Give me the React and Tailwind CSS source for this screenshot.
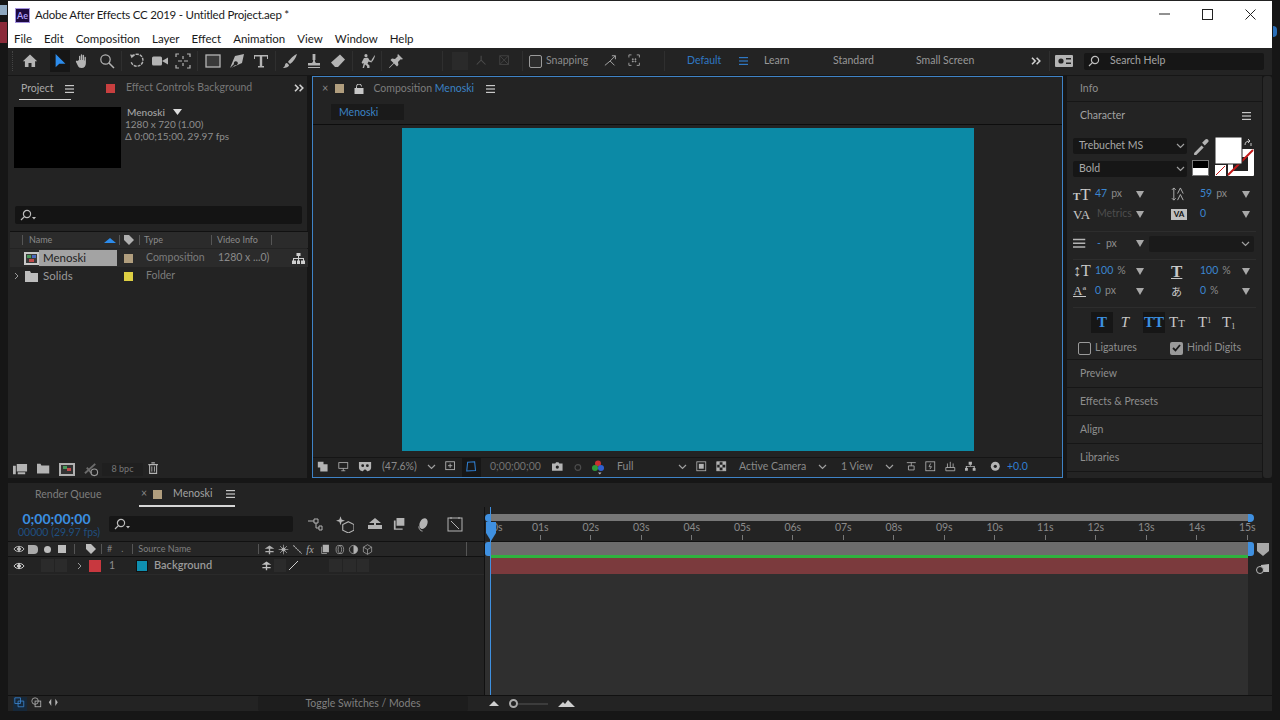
import React from 'react';

const Ic = ({ s = 16, className = 'text-[#b4b4b4]', children, vb = '0 0 16 16' }) => (
  <svg width={s} height={s} viewBox={vb} fill="none" stroke="none" className={`shrink-0 ${className}`}>
    {children}
  </svg>
);

const Burger = ({ className = 'text-[#c8c8c8]' }) => (
  <svg width="9" height="8" viewBox="0 0 9 8" className={`shrink-0 ${className}`} fill="currentColor">
    <rect y="0" width="9" height="1.2" />
    <rect y="3.4" width="9" height="1.2" />
    <rect y="6.8" width="9" height="1.2" />
  </svg>
);

const Chev = ({ className = 'text-[#a0a0a0]' }) => (
  <svg width="9" height="6" viewBox="0 0 9 6" className={`shrink-0 ${className}`} fill="none" stroke="currentColor" strokeWidth="1.2">
    <path d="M1 1l3.5 3.5L8 1" />
  </svg>
);

const Tri = () => (
  <svg width="8" height="7" viewBox="0 0 8 7" className="shrink-0 text-[#a8a8a8]" fill="currentColor">
    <path d="M0 0h8L4 7z" />
  </svg>
);

const Dbl = () => (
  <svg width="10" height="8" viewBox="0 0 10 8" className="shrink-0 text-[#d0d0d0]" fill="none" stroke="currentColor" strokeWidth="1.6">
    <path d="M1 .8L4.2 4 1 7.2M5.6 .8L8.8 4 5.6 7.2" />
  </svg>
);

const SearchGlass = ({ drop }) => (
  <svg width="16" height="12" viewBox="0 0 16 12" className="shrink-0 text-[#bdbdbd]" fill="none" stroke="currentColor" strokeWidth="1.2">
    <circle cx="7" cy="5" r="3.6" />
    <path d="M4.4 7.6L1 11" />
    {drop && <path d="M12 8h4l-2 2.4z" fill="currentColor" stroke="none" />}
  </svg>
);

const Sep = ({ className = '' }) => <div className={`w-px h-5 bg-[#2f2f2f] shrink-0 ${className}`} />;

function Toolbar() {
  return (
    <div className="h-[27px] ml-[8px] mr-[8px] pb-[1px] flex items-center bg-[#232323] text-[10.5px] text-[#989898] shrink-0">
      <div className="w-[9px] ml-[4px] h-5 border-l border-dotted border-[#444]" />
      {/* home */}
      <div className="ml-[1px]"><Ic><path fill="currentColor" d="M8 1.5L.8 8.2h2.1V14h3.6v-4h3v4h3.6V8.2h2.1z" /></Ic></div>
      {/* selection */}
      <div className="ml-[12px] w-[20px] h-[22px] bg-[#161616] flex items-center justify-center">
        <Ic s={14} className="text-[#2d8ceb]"><path fill="currentColor" d="M3 0v15l4.2-4h7z" /></Ic>
      </div>
      <div className="ml-[5px]"><Ic><path fill="currentColor" d="M4 7V3.5c0-1 1.3-1 1.3 0V7h.5V2c0-1 1.4-1 1.4 0v5h.5V2.6c0-1 1.4-1 1.4 0V7.6h.5V4.4c0-1 1.3-1 1.3 0V10c0 3-1.6 5-4.3 5-2.2 0-3-1-3.7-2.3L1 9c-.5-1 .7-1.7 1.4-.9z" /></Ic></div>
      <div className="ml-[8px]"><Ic><circle cx="6.5" cy="6.5" r="4.7" stroke="currentColor" strokeWidth="1.2" /><path d="M10 10l5 5" stroke="currentColor" strokeWidth="1.5" /></Ic></div>
      <Sep className="ml-[6px]" />
      <div className="ml-[7px]"><Ic><path d="M3.2 3.5A6 6 0 1 1 2.2 9" stroke="currentColor" strokeWidth="1.4" strokeDasharray="3 1" /><path d="M1 1.5l5 .4-3.4 3.4z" fill="currentColor" /></Ic></div>
      <div className="ml-[7px]"><Ic><rect x="0" y="3.5" width="10" height="9" rx="1.5" fill="currentColor" /><path d="M10 8l6-3.5v7z" fill="currentColor" /></Ic></div>
      <div className="ml-[7px]"><Ic><path d="M1 4V1h3M12 1h3v3M15 12v3h-3M4 15H1v-3" stroke="currentColor" strokeWidth="1.2" /><path d="M3 8h4M9 8h4M8 3v3M8 10v3" stroke="currentColor" strokeWidth="1.2" /></Ic></div>
      <Sep className="ml-[6px]" />
      <div className="ml-[7px]"><Ic><rect x="1" y="2" width="14" height="12" fill="#3a3a3a" stroke="currentColor" strokeWidth="1.3" /></Ic></div>
      <div className="ml-[8px]"><Ic><path fill="currentColor" d="M15 1L6 3 1 15l2.5-2.5L5 11a2 2 0 1 1 1 1l-1.500 1.500L2 15l11-5z" /></Ic></div>
      <div className="ml-[8px]"><Ic><path fill="currentColor" d="M1 2h14v4h-1V3.4H9.2V13H11v1.4H5V13h1.800V3.400H2V6H1z" /></Ic></div>
      <Sep className="ml-[6px]" />
      <div className="ml-[6px]"><Ic><path fill="currentColor" d="M15 1c-3 1-7 5-9 8l2 2c3-2 6-6 7-10zM5 10c-2 0-2 2-2.200 3L1 15c3 0 6-1 6-3z" /></Ic></div>
      <div className="ml-[8px]"><Ic><path fill="currentColor" d="M6.600 1h2.800v6h-.6c0 2 .6 2.600 1.600 3H14v2.500H2V10h3.600c1-.4 1.600-1 1.600-3h-.6zM2 14h12v1H2z" /></Ic></div>
      <div className="ml-[8px]"><Ic><path fill="currentColor" d="M10 1.500l5 5-7 7.500H5L1 9.500z" /></Ic></div>
      <Sep className="ml-[6px]" />
      <div className="ml-[7px]"><Ic><path fill="currentColor" d="M6 1a1.600 1.600 0 1 1-.1 3.200A1.600 1.600 0 0 1 6 1zM4 5l4-.3 1.500 2.500 2.500 1-.5 1.200-3-1-1 2.400 2 1.600V15H7.200l-.2-2-2-1.400-1 3.400H2.600l1.200-5-1.300.7L1.600 9.600zM15 2c-1 1-3 4-3.800 6l1 .5C13.500 7 15 4 15 2z" /></Ic></div>
      <Sep className="ml-[5px]" />
      <div className="ml-[6px]"><Ic><path fill="currentColor" d="M10 1l5 5-1.200.6-1.100-.4-2.700 2.800.4 3L9 13.500 6 10.500 1.500 15l-.5-.5L5.500 10 2.500 7l1.500-1.400 3 .4L9.800 3.300l-.4-1.100z" /></Ic></div>
      <Sep className="ml-[38px]" />
      <div className="ml-[9px] w-[16px] h-[18px] bg-[#2a2a2a]" />
      <div className="ml-[7px]"><Ic s={14} className="text-[#4a4a4a]"><path d="M7 2v5L2 12M7 7l5 5" stroke="currentColor" strokeWidth="1.2" /></Ic></div>
      <div className="ml-[9px]"><Ic s={14} className="text-[#444]"><path d="M2 2l10 10M12 2L2 12M2 2h10v10H2z" stroke="currentColor" strokeWidth="1" /></Ic></div>
      <Sep className="ml-[10px]" />
      <div className="ml-[6px] w-[13px] h-[13px] border border-[#9a9a9a] rounded-[2px] bg-[#2c2c2c]" />
      <span className="ml-[4px] text-[#8c8c8c] w-[50px]">Snapping</span>
      <div className="ml-[8px]"><Ic s={14} className="text-[#a8a8a8]"><path d="M1 13l6-5 5 5M7 8l6-6M9 2h4v4" stroke="currentColor" strokeWidth="1.1" /></Ic></div>
      <div className="ml-[10px]"><Ic s={14} className="text-[#a8a8a8]"><path d="M1 4V1h3M10 1h3v3M13 10v3h-3M4 13H1v-3M5 5.500h1v1H5zM8 5.500h1v1H8zM5 8h1v1H5zM8 8h1v1H8z" stroke="currentColor" strokeWidth="1" /></Ic></div>
      <Sep className="ml-[22px]" />
      <span className="ml-[22px] text-[#2f78c4] w-[38px]">Default</span>
      <div className="ml-[14px]"><Burger className="text-[#2f78c4]" /></div>
      <span className="ml-[16px] w-[40px]">Learn</span>
      <span className="ml-[29px] w-[60px]">Standard</span>
      <span className="ml-[23px] w-[80px]">Small Screen</span>
      <div className="ml-[35px]"><Dbl /></div>
      <Sep className="ml-[8px]" />
      <div className="ml-[5px] mr-[5px]">
        <Ic s={18} className="text-[#b4b4b4]" vb="0 0 18 14">
          <rect y="1" width="18" height="12" rx="1" fill="currentColor" />
          <circle cx="6" cy="7" r="2.600" fill="#232323" />
          <path d="M11 4h5v1.500h-5zM11 8.500h5V10h-5z" fill="#232323" />
        </Ic>
      </div>
      <div className="ml-[6px] w-[180px] h-[17px] bg-[#161616] rounded-[2px] flex items-center pl-[4px]">
        <SearchGlass />
        <span className="ml-[6px] text-[#a4a4a4] font-normal">Search Help</span>
      </div>
    </div>
  );
}

function ProjectPanel() {
  return (
    <div className="w-[299px] bg-[#232323] flex flex-col text-[10.5px] text-[#8e8e8e] shrink-0">
      <div className="h-[26px] flex items-center relative shrink-0">
        <div className="ml-[11px] w-[52px] h-[26px] pt-[4px] flex items-start gap-[11px] relative">
          <span className="ml-[2px] text-[#a8a8a8] leading-[16px]">Project</span>
          <div className="mt-[5px]"><Burger /></div>
        </div>
        <div className="ml-[35px] -mt-[2px] w-[9px] h-[9px] bg-[#c83f3f]" />
        <span className="ml-[11px] -mt-[2px] w-[130px] whitespace-nowrap text-[#777]">Effect Controls Background</span>
        <div className="ml-auto mr-[3px] -mt-[2px]"><Dbl /></div>
      </div>
      <div className="ml-[11px] w-[52px] h-[1px] bg-[#d8d8d8] -mt-[3px] mb-[2px] shrink-0" />
      <div className="flex ml-[6px] mt-[5px] shrink-0">
        <div className="w-[107px] h-[61px] bg-black" />
        <div className="ml-[4px] leading-[12px] text-[10px] text-[#8e8e8e] -mt-[1px]">
          <div className="ml-[2px] flex items-center gap-[8px] font-semibold text-[#9e9e9e]">Menoski <svg width="9" height="6" viewBox="0 0 9 6" fill="#dcdcdc"><path d="M0 0h9L4.500 6z" /></svg></div>
          <div>1280 x 720 (1.00)</div>
          <div>Δ 0;00;15;00, 29.97 fps</div>
        </div>
      </div>
      <div className="ml-[7px] mr-[5px] mt-[38px] h-[18px] bg-[#141414] rounded-[2px] flex items-center pl-[5px] shrink-0"><SearchGlass drop /></div>
      <div className="mt-[7px] ml-[2px] h-[17px] w-[298px] bg-[#2b2b2b] flex items-center text-[9px] text-[#8a8a8a] border-t border-[#111] shrink-0">
        <div className="w-px h-[10px] bg-[#555] ml-[12px]" />
        <span className="ml-[6px] w-[75px]">Name</span>
        <svg width="12" height="5" viewBox="0 0 12 5" fill="#2d8ceb"><path d="M6 0l6 5H0z" /></svg>
        <div className="w-px h-[10px] bg-[#555] ml-[3px]" />
        <svg width="12" height="12" viewBox="0 0 12 12" className="ml-[3px] text-[#b0b0b0]" fill="currentColor"><path d="M1 1h5l5 5-5 5-5-5z" /></svg>
        <div className="w-px h-[10px] bg-[#555] ml-[4px]" />
        <span className="ml-[4px] w-[67px]">Type</span>
        <div className="w-px h-[10px] bg-[#555]" />
        <span className="ml-[5px] w-[54px] whitespace-nowrap">Video Info</span>
        <div className="w-px h-[10px] bg-[#555]" />
      </div>
      <div className="ml-[2px] h-[18px] w-[298px] bg-[#2b2b2b] flex items-center mt-[1px] shrink-0">
        <svg width="15" height="13" viewBox="0 0 15 13" className="ml-[14px]"><rect width="15" height="13" fill="#c8c8c8" /><rect x="2" y="2" width="11" height="9" fill="#3a3a3a" /><rect x="3" y="3" width="4" height="3" fill="#4a9a5a" /><rect x="8" y="3" width="4" height="3" fill="#4a6ac0" /><rect x="5" y="7" width="5" height="3" fill="#c04a4a" /></svg>
        <div className="w-[78px] h-[16px] bg-[#a3a3a3] text-[#1e1e1e] flex items-center pl-[4px] text-[11.5px]">Menoski</div>
        <div className="ml-[7px] w-[9px] h-[9px] bg-[#b19e7e]" />
        <span className="ml-[13px] w-[72px] text-[#7c7c7c]">Composition</span>
        <span className="w-[60px] text-[#8a8a8a] whitespace-nowrap">1280 x ...0)</span>
        <svg width="13" height="11" viewBox="0 0 13 11" className="ml-[14px] text-[#cfcfcf]" fill="currentColor"><path d="M4.500 0h4v3H7v2h5v2.500h1V11H9V7.500h2V6H7v1.500h1V11H5V7.500h1V6H2v1.500h2V11H0V7.500h1V5h5V3H4.500z" /></svg>
      </div>
      <div className="ml-[2px] h-[18px] flex items-center shrink-0">
        <svg width="5" height="8" viewBox="0 0 5 8" className="ml-[4px] text-[#9a9a9a]" fill="none" stroke="currentColor"><path d="M1 1l3 3-3 3" /></svg>
        <svg width="13" height="11" viewBox="0 0 13 11" className="ml-[6px]" fill="#bdbdbd"><path d="M0 0h5l1 2h7v9H0z" /></svg>
        <span className="ml-[5px] w-[74px] text-[#9a9a9a] text-[11.5px]">Solids</span>
        <div className="ml-[7px] w-[9px] h-[9px] bg-[#ddcf43]" />
        <span className="ml-[13px] text-[#7c7c7c]">Folder</span>
      </div>
      <div className="flex-1" />
      <div className="h-[20px] flex items-center pl-[5px] pt-[2px] text-[#a2a2a2] shrink-0">
        <Ic s={15}><path fill="currentColor" d="M0 4h3v9H0zM4 2h11v8H4zM5 11h8v2H5z" /></Ic>
        <div className="ml-[9px]"><Ic s={14}><path fill="currentColor" d="M0 2h4l1 2h9v9H0z" /></Ic></div>
        <div className="ml-[8px]"><svg width="16" height="13" viewBox="0 0 16 13"><rect width="16" height="13" fill="#b0b0b0" /><rect x="2" y="2" width="12" height="9" fill="#333" /><rect x="4" y="3" width="4" height="3" fill="#4a9a5a" /><rect x="8" y="5" width="4" height="3" fill="#c04a4a" /></svg></div>
        <div className="ml-[9px]"><Ic s={15} className="text-[#6c6c6c]"><path d="M1 12L12 2M3 6l5 6" stroke="currentColor" strokeWidth="2" /><circle cx="11" cy="11" r="3.500" stroke="#9a9a9a" strokeWidth="1.200" /></Ic></div>
        <div className="ml-[3px] w-[41px] h-[13px] bg-[#1f1f1f] text-[9px] text-[#777] flex items-center justify-center">8 bpc</div>
        <div className="ml-[4px]"><Ic s={14}><path d="M3 3h8v10H3zM1.500 3h11M5 1h4" stroke="currentColor" strokeWidth="1.200" /><path d="M5.500 5v6M8.500 5v6" stroke="currentColor" /></Ic></div>
      </div>
    </div>
  );
}

function CompPanel() {
  return (
    <div className="ml-[5px] w-[751px] border border-[#3f83c6] bg-[#232323] flex flex-col text-[10.5px] text-[#8e8e8e] shrink-0">
      <div className="h-[25px] pb-[2px] flex items-center shrink-0">
        <span className="ml-[9px] text-[#888] text-[11px]">×</span>
        <div className="ml-[7px] w-[9px] h-[9px] bg-[#b19e7e]" />
        <svg width="10" height="10" viewBox="0 0 10 10" className="ml-[10px] text-[#c8c8c8]" fill="none" stroke="currentColor"><rect x="1" y="4.500" width="8" height="5" fill="currentColor" /><path d="M2.500 4.500V2.500a2.500 2.500 0 0 1 5 0" /></svg>
        <span className="ml-[9px] text-[#7c7c7c]">Composition <span className="text-[#3b82c4]">Menoski</span></span>
        <div className="ml-[12px]"><Burger /></div>
      </div>
      <div className="h-[23px] border-b border-[#0d0d0d] flex items-start pt-[2px] shrink-0">
        <div className="ml-[18px] w-[73px] h-[16px] bg-[#1a1a1a] text-[#3b82c4] pl-[8px] leading-[16px]">Menoski</div>
      </div>
      <div className="flex-1 flex justify-center pt-[3px]">
        <div className="w-[572px] h-[323px] bg-[#0c8aa6]" />
      </div>
      <div className="h-[20px] flex items-center bg-[#212121] text-[#8a8a8a] shrink-0 border-t border-[#151515] pb-[1px]">
        <div className="ml-[4px]"><Ic s={13}><path fill="currentColor" d="M1 1h7v7H1zM4 4h9v9H4z" /></Ic></div>
        <div className="ml-[8px]"><Ic s={13}><rect x="1" y="2" width="11" height="7" stroke="currentColor" /><path d="M4 12h5M6.500 9v3" stroke="currentColor" /></Ic></div>
        <div className="ml-[7px]"><Ic s={15}><path fill="currentColor" d="M1 2h13v6c0 3-3 4-4 4L8 10H7l-2 2C4 12 1 11 1 8z" /><circle cx="5" cy="6" r="1.500" fill="#222" /><circle cx="10" cy="6" r="1.500" fill="#222" /></Ic></div>
        <span className="ml-[9px] w-[40px] whitespace-nowrap">(47.6%)</span>
        <div className="ml-[5px]"><Chev /></div>
        <div className="ml-[8px]"><Ic s={14}><rect x="2" y="2" width="10" height="9" stroke="currentColor" /><path d="M7 4v5M4.500 6.500h5" stroke="currentColor" /></Ic></div>
        <div className="ml-[4px] w-[19px] h-[19px] bg-[#161616] flex items-center justify-center"><Ic s={14} className="text-[#2f7ed0]"><path d="M3 2.500l8-.5 1 10-10 .5z" stroke="currentColor" strokeWidth="1.200" /></Ic></div>
        <span className="ml-[9px] w-[55px] text-[#727272]">0;00;00;00</span>
        <div className="ml-[7px]"><Ic s={13}><path fill="currentColor" d="M0 3h4l1-1.500h3L9 3h4v9H0z" /><circle cx="6.500" cy="7.500" r="2" fill="#222" /></Ic></div>
        <div className="ml-[8px]"><Ic s={13} className="text-[#4c4c4c]"><circle cx="6" cy="8" r="3.500" stroke="currentColor" strokeWidth="1.400" /></Ic></div>
        <svg width="12" height="15" viewBox="0 0 12 15" className="ml-[6px]"><circle cx="6" cy="3.500" r="3" fill="#c83030" /><circle cx="3" cy="8" r="3" fill="#2f9a3a" /><circle cx="9" cy="8" r="3" fill="#2f5fd0" /><path d="M6 12.500h3.500l-1.700 2z" fill="#bbb" /></svg>
        <div className="ml-[7px] w-[76px] flex items-center pl-[6px]">
          <span className="w-[62px]">Full</span><Chev />
        </div>
        <div className="ml-[9px]"><Ic s={13}><rect x="1" y="1" width="11" height="11" stroke="currentColor" /><rect x="3.500" y="3.500" width="6" height="6" fill="currentColor" /></Ic></div>
        <div className="ml-[7px]"><Ic s={13}><rect x="1" y="1" width="11" height="11" stroke="currentColor" /><path fill="currentColor" d="M1 1h3.500v3.500H1zM8 1h4v3.500H8zM4.500 4.500H8V8H4.500zM1 8h3.500v4H1zM8 8h4v4H8z" /></Ic></div>
        <span className="ml-[10px] w-[68px] whitespace-nowrap">Active Camera</span>
        <div className="ml-[11px]"><Chev /></div>
        <span className="ml-[14px] w-[35px] whitespace-nowrap">1 View</span>
        <div className="ml-[9px]"><Chev /></div>
        <div className="ml-[12px]"><Ic s={13}><path d="M1 2h11M3 11h7V6H3zM6.500 2v4" stroke="currentColor" /></Ic></div>
        <div className="ml-[6px]"><Ic s={13}><rect x="1" y="1" width="11" height="11" stroke="currentColor" /><path d="M7 3L5 7h3l-2 3" stroke="currentColor" /></Ic></div>
        <div className="ml-[7px]"><Ic s={13}><path d="M1 8h11v4H1zM3 3v5M6.500 1v7M10 3v5" stroke="currentColor" /></Ic></div>
        <div className="ml-[7px]"><Ic s={13}><path fill="currentColor" d="M4.500 1h4v3.500H7V6h5v2.500h1V12H9.500V8.500h1.200V7.200H2.300v1.300h1.200V12H0V8.500h1V6h5V4.500H4.500z" /></Ic></div>
        <div className="ml-[12px]"><Ic s={13}><circle cx="6.500" cy="6.500" r="5.500" fill="currentColor" /><circle cx="6.500" cy="6.500" r="2" fill="#222" /></Ic></div>
        <span className="ml-[4px] text-[#2f7ed0]">+0.0</span>
      </div>
    </div>
  );
}

const Row = ({ children, className = '' }) => <div className={`flex items-center ${className}`}>{children}</div>;

const Metric = ({ icon, value, unit, dim, slot, w }) => (
  <div className={`flex items-center h-[20px] ${w}`}>
    <div className={`${slot} flex items-center shrink-0`}>{icon}</div>
    <span className={`${dim ? 'text-[#4e4e4e]' : 'text-[#3b86d0]'}`}>{value}</span>
    {unit && <span className="ml-[4px] text-[#8a8a8a]">{unit}</span>}
    <div className="ml-auto"><Tri /></div>
  </div>
);

function CharacterPanel() {
  const serif = "font-['Liberation_Serif',serif] font-bold text-[#c8c8c8] leading-none";
  return (
    <div className="ml-[4px] w-[195px] flex flex-col bg-[#232323] text-[10.5px] text-[#8e8e8e] shrink-0">
      <div className="h-[26px] pl-[13px] flex items-center border-b border-[#161616] shrink-0">Info</div>
      <div className="h-[28px] pl-[13px] pr-[11px] flex items-center justify-between text-[#a2a2a2] shrink-0">
        Character
        <Burger />
      </div>
      <div className="flex pl-[6px] shrink-0 mt-[8px]">
        <div className="flex flex-col gap-[7px]">
          <div className="w-[114px] h-[16px] bg-[#161616] flex items-center pl-[6px] text-[#a8a8a8] rounded-[2px]"><span className="w-[97px]">Trebuchet MS</span><Chev /></div>
          <div className="w-[114px] h-[16px] bg-[#161616] flex items-center pl-[6px] text-[#a8a8a8] rounded-[2px]"><span className="w-[97px]">Bold</span><Chev /></div>
        </div>
        <div className="ml-[5px] flex flex-col gap-[5px]">
          <Ic s={17}><path d="M2 14l7-7 2 2-7 7H2zM9.500 4.500l3-3a1.500 1.500 0 0 1 2.500 2.500l-3 3z" fill="currentColor" /></Ic>
          <div className="w-[17px] h-[16px] bg-white border border-[#777] flex flex-col"><div className="h-[7px] bg-black" /></div>
        </div>
        <svg width="39" height="39" viewBox="0 0 39 39" className="ml-[6px] -mt-[1px]">
          <rect x="13" y="12" width="26" height="27" fill="#fff" rx="1" />
          <rect x="18" y="20" width="15" height="14" fill="#222" />
          <path d="M13 38L38 13" stroke="#c21818" strokeWidth="2" />
          <rect x="0" y="0" width="27" height="27" fill="#fff" stroke="#222" />
          <rect x="0" y="28" width="11" height="11" fill="#fff" />
          <path d="M1 38l9-9" stroke="#c21818" />
          <path d="M30 8c0-3 2-4 5-4M33 2l2 2-2 2M36 6v3" stroke="#c8c8c8" fill="none" />
        </svg>
      </div>
      <div className="mt-[7px] pl-[6px] grid grid-cols-[98px_1fr] shrink-0">
        <Metric slot="w-[22px]" w="w-[71px]" value="47" unit="px" icon={<span className={serif}><span className="text-[11px]">T</span><span className="text-[17px] font-normal">T</span></span>} />
        <Metric slot="w-[29px]" w="w-[79px]" value="59" unit="px" icon={<Ic s={15}><path d="M3 1v13M1 3l2-2 2 2M1 12l2 2 2-2M7 7l3-6 3 6M7 14l3-6 3 6" stroke="currentColor" /></Ic>} />
        <Metric slot="w-[24px]" w="w-[71px]" dim value="Metrics" icon={<span className={`${serif} font-normal text-[13px]`}>VA</span>} />
        <Metric slot="w-[29px]" w="w-[79px]" value="0" icon={<div className="w-[16px] h-[11px] bg-[#c0c0c0] text-[#111] text-[8px] font-bold leading-[11px] text-center">VA</div>} />
      </div>
      <div className="mx-[6px] mt-[7px] h-px bg-[#2d2d2d] shrink-0" />
      <div className="flex items-center pl-[6px] mt-[3px] h-[17px] shrink-0">
        <div className="w-[71px] flex items-center">
          <Ic s={14}><path fill="currentColor" d="M0 2h14v1.800H0zM0 6.200h14V8H0zM0 10.500h14v1.800H0z" /></Ic>
          <span className="ml-[10px] text-[#3b86d0]">-</span>
          <span className="ml-[5px]">px</span>
          <div className="ml-auto"><Tri /></div>
        </div>
        <div className="ml-[5px] w-[105px] h-[16px] bg-[#1a1a1a] rounded-[2px] flex items-center justify-end pr-[4px]"><Chev /></div>
      </div>
      <div className="mx-[6px] mt-[7px] h-px bg-[#2d2d2d] shrink-0" />
      <div className="mt-[1px] pl-[6px] grid grid-cols-[98px_1fr] shrink-0">
        <Metric slot="w-[22px]" w="w-[71px]" value="100" unit="%" icon={<span className={`${serif} font-normal text-[16px]`}>↕T</span>} />
        <Metric slot="w-[29px]" w="w-[79px]" value="100" unit="%" icon={<span className={`${serif} text-[17px] underline`}>T</span>} />
        <Metric slot="w-[22px]" w="w-[71px]" value="0" unit="px" icon={<span className="font-['Liberation_Serif',serif] text-[#c8c8c8] text-[13px] underline">Aª</span>} />
        <Metric slot="w-[29px]" w="w-[79px]" value="0" unit="%" icon={<span className="font-['Noto_Sans_CJK_JP',sans-serif] text-[#c8c8c8] text-[11px]">あ</span>} />
      </div>
      <div className="mx-[6px] mt-[6px] h-px bg-[#2d2d2d] shrink-0" />
      <Row className={`mt-[3px] h-[22px] pl-[24px] ${serif} text-[15px] shrink-0`}>
        <div className="w-[22px] h-[21px] bg-[#161616] text-[#3b8fe0] flex items-center justify-center">T</div>
        <span className="ml-[3px] w-[18px] font-normal italic text-center">T</span>
        <div className="ml-[9px] w-[22px] h-[21px] bg-[#161616] text-[#3b8fe0] flex items-center justify-center">TT</div>
        <span className="ml-[4px] w-[24px] font-normal">T<span className="text-[11px]">T</span></span>
        <span className="ml-[5px] w-[24px] font-normal">T<sup className="text-[8px]">1</sup></span>
        <span className="w-[20px] font-normal">T<sub className="text-[8px]">1</sub></span>
      </Row>
      <Row className="mt-[5px] h-[20px] pl-[11px] shrink-0">
        <div className="w-[13px] h-[13px] border border-[#9a9a9a] rounded-[2px]" />
        <span className="ml-[4px] w-[75px]">Ligatures</span>
        <div className="w-[13px] h-[13px] bg-[#9a9a9a] rounded-[2px] flex items-center justify-center">
          <svg width="9" height="8" viewBox="0 0 9 8" fill="none" stroke="#1b1b1b" strokeWidth="1.800"><path d="M1 4l2.500 2.500L8 1" /></svg>
        </div>
        <span className="ml-[4px]">Hindi Digits</span>
      </Row>
      <div className="mt-[1px] border-t border-[#161616] h-[28px] pl-[13px] flex items-center shrink-0">Preview</div>
      <div className="border-t border-[#161616] h-[28px] pl-[13px] flex items-center shrink-0">Effects &amp; Presets</div>
      <div className="border-t border-[#161616] h-[28px] pl-[13px] flex items-center shrink-0">Align</div>
      <div className="border-t border-b border-[#161616] h-[29px] pl-[13px] flex items-center shrink-0">Libraries</div>
    </div>
  );
}

const seconds = ['01s', '02s', '03s', '04s', '05s', '06s', '07s', '08s', '09s', '10s', '11s', '12s', '13s', '14s', '15s'];

function Timeline() {
  return (
    <div className="ml-[8px] mr-[8px] mt-[5px] flex flex-col h-[228px] bg-[#232323] text-[10.5px] text-[#8e8e8e] shrink-0">
      <div className="h-[24px] flex items-center shrink-0">
        <span className="ml-[27px] w-[66px] whitespace-nowrap text-[#7e7e7e]">Render Queue</span>
        <div className="ml-[38px] w-[96px] h-[24px] border-b-2 border-[#d6d6d6] flex items-center">
          <span className="ml-[2px] text-[#888]">×</span>
          <div className="ml-[6px] w-[9px] h-[9px] bg-[#b19e7e]" />
          <span className="ml-[11px] text-[#a2a2a2] w-[40px]">Menoski</span>
          <div className="ml-[13px]"><Burger /></div>
        </div>
      </div>
      <div className="flex flex-1 min-h-0">
        <div className="w-[476px] flex flex-col shrink-0">
          <div className="h-[34px] flex items-center shrink-0">
            <div className="ml-[10px] w-[77px] text-center">
              <div className="text-[#3b8fe0] text-[14px] font-bold leading-[15px] whitespace-nowrap">0;00;00;00</div>
              <div className="text-[#1f4f80] text-[10.5px] leading-[12px] whitespace-nowrap">00000 (29.97 fps)</div>
            </div>
            <div className="ml-[14px] w-[184px] h-[16px] bg-[#161616] flex items-center pl-[5px] rounded-[2px]"><SearchGlass drop /></div>
            <div className="ml-[15px]"><Ic s={16}><path d="M0 5h6M6 3h4v4H6zM8 7v5h3M11 10h3v4h-3z" stroke="currentColor" fill="none" /></Ic></div>
            <div className="ml-[12px]"><Ic s={18}><path d="M4 1l1 3 3 1-3 1-1 3-1-3-3-1 3-1z" fill="currentColor" /><path d="M11 6l5 2.500v5L11 16l-5-2.500v-5z" stroke="currentColor" /></Ic></div>
            <div className="ml-[13px]"><Ic s={16}><path fill="currentColor" d="M8 2l6 5H2zM1 9h14v4H1zM7 7h2v3H7z" /></Ic></div>
            <div className="ml-[10px]"><Ic s={14}><path fill="currentColor" d="M4 1h9v9H4zM1 4h2v9h8v1.500H1z" /></Ic></div>
            <div className="ml-[9px]"><Ic s={15}><ellipse cx="8" cy="7" rx="4" ry="6" transform="rotate(25 8 7)" fill="currentColor" /><path d="M3 10c0 3 2 5 4 5" stroke="currentColor" /></Ic></div>
            <div className="ml-[16px]"><Ic s={16}><rect x="1" y="2" width="14" height="13" stroke="currentColor" /><path d="M4 5l8 8M4 1v2M12 1v2" stroke="currentColor" /></Ic></div>
          </div>
          <div className="h-[16px] border-t border-b border-[#111] bg-[#262626] flex items-center shrink-0 text-[9px] text-[#808080]">
            <div className="ml-[5px]"><svg width="12" height="8" viewBox="0 0 12 8" fill="none" stroke="#bdbdbd"><path d="M1 4c2-3.500 8-3.500 10 0-2 3.500-8 3.500-10 0z" /><circle cx="6" cy="4" r="1.500" fill="#bdbdbd" /></svg></div>
            <div className="ml-[3px] w-[10px] h-[9px] bg-[#aaa] rounded-r-[4px]" />
            <div className="ml-[6px] w-[7px] h-[7px] rounded-full bg-[#bdbdbd]" />
            <div className="ml-[7px] w-[8px] h-[8px] bg-[#bdbdbd]" />
            <div className="ml-[8px] w-px h-[10px] bg-[#555]" />
            <div className="ml-[10px]"><svg width="12" height="12" viewBox="0 0 12 12" fill="#bdbdbd"><path d="M1 1h5l5 5-5 5-5-5z" /></svg></div>
            <div className="ml-[4px] w-px h-[10px] bg-[#555]" />
            <span className="ml-[5px]">#</span>
            <span className="ml-[9px]">.</span>
            <div className="ml-[9px] w-px h-[10px] bg-[#555]" />
            <span className="ml-[5px] w-[120px] whitespace-nowrap">Source Name</span>
            <div className="w-px h-[10px] bg-[#555]" />
            <div className="ml-[5px] flex items-center gap-[3px] text-[#b0b0b0]">
              <Ic s={11} className="text-[#b0b0b0]"><path fill="currentColor" d="M8 2l7 5H1zM7 7h2v8H7zM2 10h12v2H2z" /></Ic>
              <Ic s={11} className="text-[#b0b0b0]"><circle cx="8" cy="8" r="3" fill="currentColor" /><path d="M8 1v14M1 8h14M3 3l10 10M13 3L3 13" stroke="currentColor" /></Ic>
              <Ic s={11} className="text-[#b0b0b0]"><path d="M2 2l12 12" stroke="currentColor" strokeWidth="1.500" strokeDasharray="3 1" /></Ic>
              <span className="w-[11px] italic text-[10px] font-['Liberation_Serif',serif] text-[#b0b0b0]">fx</span>
              <Ic s={11} className="text-[#b0b0b0]"><path fill="currentColor" d="M4 1h9v11H4zM2 4v10h8v-1H3V4z" /></Ic>
              <Ic s={11} className="text-[#b0b0b0]"><ellipse cx="7" cy="8" rx="4" ry="6" stroke="currentColor" /><ellipse cx="10" cy="8" rx="4" ry="6" stroke="currentColor" /></Ic>
              <Ic s={11} className="text-[#b0b0b0]"><circle cx="8" cy="8" r="6" stroke="currentColor" /><path d="M8 2a6 6 0 0 1 0 12z" fill="currentColor" /></Ic>
              <Ic s={11} className="text-[#b0b0b0]"><path d="M8 1l6 3.500v7L8 15l-6-3.500v-7zM2 4.500L8 8l6-3.500M8 8v7" stroke="currentColor" /></Ic>
            </div>
            <div className="ml-[93px] w-px h-[14px] bg-[#555]" />
          </div>
          <div className="h-[18px] flex items-center shrink-0 border-b border-[#2a2a2a]">
            <div className="ml-[5px]"><svg width="12" height="8" viewBox="0 0 12 8" fill="none" stroke="#d0d0d0"><path d="M1 4c2-3.500 8-3.500 10 0-2 3.500-8 3.500-10 0z" /><circle cx="6" cy="4" r="1.500" fill="#d0d0d0" /></svg></div>
            <div className="ml-[16px] w-[13px] h-[13px] bg-[#2b2b2b]" />
            <div className="ml-px w-[12px] h-[13px] bg-[#2b2b2b]" />
            <svg width="5" height="8" viewBox="0 0 5 8" className="ml-[10px] text-[#9a9a9a]" fill="none" stroke="currentColor"><path d="M1 1l3 3-3 3" /></svg>
            <div className="ml-[7px] w-[12px] h-[12px] bg-[#c8383f]" />
            <span className="ml-[8px] w-[18px]">1</span>
            <div className="ml-[9px] w-[12px] h-[12px] bg-[#0f8fb0] border border-[#111]" />
            <span className="ml-[6px] w-[107px] font-semibold text-[#9a9a9a] text-[11px]">Background</span>
            <Ic s={11} className="text-[#c0c0c0]"><path fill="currentColor" d="M8 2l7 5H1zM7 7h2v8H7zM2 10h12v2H2z" /></Ic>
            <div className="ml-[2px] w-[12px] h-[13px] bg-[#2b2b2b]" />
            <svg width="11" height="11" viewBox="0 0 11 11" className="ml-[2px]" stroke="#cfcfcf"><path d="M1 10L10 1" /></svg>
            <div className="ml-[30px] w-[13px] h-[13px] bg-[#2b2b2b]" />
            <div className="ml-px w-[13px] h-[13px] bg-[#2b2b2b]" />
            <div className="ml-px w-[12px] h-[13px] bg-[#2b2b2b]" />
          </div>
        </div>
        <div className="flex flex-col w-[764px] shrink-0 border-l border-[#111] bg-[#2f2f2f] relative">
          <div className="absolute left-[5px] top-0 bottom-0 w-px bg-[#3f90e0] z-10" />
          <div className="absolute left-0 top-[15px] w-[12px] h-[20px] z-10">
            <svg width="12" height="20" viewBox="0 0 12 20" fill="#3f90e0"><path d="M1 0h10v11l-5 8-5-8z" /></svg>
          </div>
          <div className="absolute left-0 top-[7px] w-[6px] h-[8px] bg-[#3f90e0] rounded-l-[4px] z-10" />
          <div className="absolute left-0 top-[35px] w-[6px] h-[14px] bg-[#3f90e0] rounded-l-[3px] z-10" />
          <div className="absolute left-[763px] top-[7px] w-[6px] h-[8px] bg-[#3f90e0] rounded-r-[4px] z-10" />
          <div className="absolute left-[763px] top-[35px] w-[6px] h-[14px] bg-[#3f90e0] rounded-r-[3px] z-10" />
          <div className="bg-[#232323] h-[34px] shrink-0 flex flex-col">
            <div className="mt-[7px] ml-[5px] w-[758px] h-[7px] bg-[#777] shrink-0" />
            <div className="flex h-[19px] shrink-0 text-[#8a8a8a] ml-[-13px]">
              <div className="w-[43px] shrink-0 pl-[20px] leading-[13px]">0s</div>
              {seconds.map((s) => (
                <div key={s} className="w-[50.5px] flex flex-col items-center shrink-0 leading-[13px]">
                  {s}
                  <div className="w-px h-[5px] bg-[#777] mt-[1px]" />
                </div>
              ))}
            </div>
          </div>
          <div className="h-[14px] ml-[5px] w-[758px] bg-[#6c6c6c] border-t border-[#111] shrink-0" />
          <div className="h-[3px] ml-[5px] w-[758px] bg-[#2fb13f] shrink-0" />
          <div className="h-[16px] ml-[5px] w-[758px] bg-[#7b3a3d] shrink-0" />
        </div>
        <div className="w-[24px] -ml-px flex flex-col items-center shrink-0 pt-[34px]">
          <svg width="12" height="13" viewBox="0 0 12 13" className="ml-[8px] mt-[2px]" fill="#a8a8a8"><path d="M0 0h12v8l-6 5-6-5z" /></svg>
          <svg width="14" height="12" viewBox="0 0 14 12" className="ml-[6px] mt-[7px]" fill="#b8b8b8"><path d="M6 2l8-1v8H6z" /><circle cx="5" cy="7" r="3.500" fill="#232323" stroke="#b8b8b8" /></svg>
        </div>
      </div>
      <div className="h-[16px] border-t border-[#111] flex items-center shrink-0">
        <div className="ml-[5px] w-[14px] h-[14px] bg-[#16283a] flex items-center justify-center"><Ic s={13} className="text-[#3b86d0]"><path d="M1 1h7v7H1zM5 5h7v7H5z" stroke="currentColor" /></Ic></div>
        <div className="ml-[4px]"><Ic s={13}><circle cx="5" cy="5" r="4" stroke="currentColor" /><rect x="5" y="5" width="7" height="7" stroke="currentColor" /></Ic></div>
        <div className="ml-[4px]"><Ic s={13}><path d="M1 6.500L4 2v9zM12 6.500L9 2v9z" fill="currentColor" /></Ic></div>
        <div className="ml-[197px] w-[210px] h-[15px] bg-[#1d1d1d] rounded-[2px] text-center leading-[15px] text-[#808080]">Toggle Switches / Modes</div>
        <svg width="10" height="5" viewBox="0 0 10 5" className="ml-[21px]" fill="#cfcfcf"><path d="M5 0l5 5H0z" /></svg>
        <div className="ml-[10px] w-[9px] h-[9px] rounded-full border-2 border-[#aaa]" />
        <div className="w-[30px] h-[2px] bg-[#3c3c3c]" />
        <svg width="17" height="7" viewBox="0 0 17 7" className="ml-[10px]" fill="#cfcfcf"><path d="M5 2l2 2 3-4 7 7H0z" /></svg>
      </div>
    </div>
  );
}

export default function App() {
  return (
    <div className="relative w-[1280px] h-[720px] overflow-hidden bg-[#161616] font-['Lato','Open_Sans',sans-serif] flex flex-col">
      <div className="absolute left-0 top-[5px] w-[7px] h-[10px] bg-[#8fa8c0]" />
      <div className="absolute left-0 top-[22px] w-[7px] h-[21px] bg-[#8b2b3a]" />
      <div className="absolute left-[1273px] top-[26px] w-[4px] h-[11px] bg-[#2a6fb8] rounded-r-full" />
      <div className="h-[48px] ml-[8px] mr-[8px] bg-white flex flex-col shrink-0 text-[#1a1a1a] border-t border-[#222]">
        <div className="h-[28px] flex items-center">
          <div className="ml-[7px] w-[15px] h-[15px] bg-[#1d0a3f] border border-[#a594e0] text-[#b7a6ff] text-[9px] leading-[13px] text-center font-semibold">Ae</div>
          <span className="ml-[5px] text-[11.5px] tracking-[-0.22px] whitespace-nowrap">Adobe After Effects CC 2019 - Untitled Project.aep *</span>
          <div className="ml-auto flex items-center -mt-[2px]">
            <svg width="11" height="2" viewBox="0 0 11 2" stroke="#222"><path d="M0 1h11" /></svg>
            <svg width="11" height="11" viewBox="0 0 11 11" className="ml-[32px]" fill="none" stroke="#222" strokeWidth="1"><rect x=".5" y=".5" width="10" height="10" /></svg>
            <svg width="11" height="11" viewBox="0 0 11 11" className="ml-[32px] mr-[16px]" fill="none" stroke="#222"><path d="M.5 .5l10 10M10.500 .5l-10 10" /></svg>
          </div>
        </div>
        <div className="flex items-center gap-[12px] pl-[6px] text-[11.5px] h-[19px]">
          {['File', 'Edit', 'Composition', 'Layer', 'Effect', 'Animation', 'View', 'Window', 'Help'].map((m) => (
            <span key={m}>{m}</span>
          ))}
        </div>
      </div>
      <Toolbar />
      <div className="ml-[8px] mt-px flex h-[402px] shrink-0">
        <ProjectPanel />
        <CompPanel />
        <CharacterPanel />
        <div className="ml-[1px] w-[9px] bg-[#272727] rounded-[3px] shrink-0" />
      </div>
      <Timeline />
    </div>
  );
}
